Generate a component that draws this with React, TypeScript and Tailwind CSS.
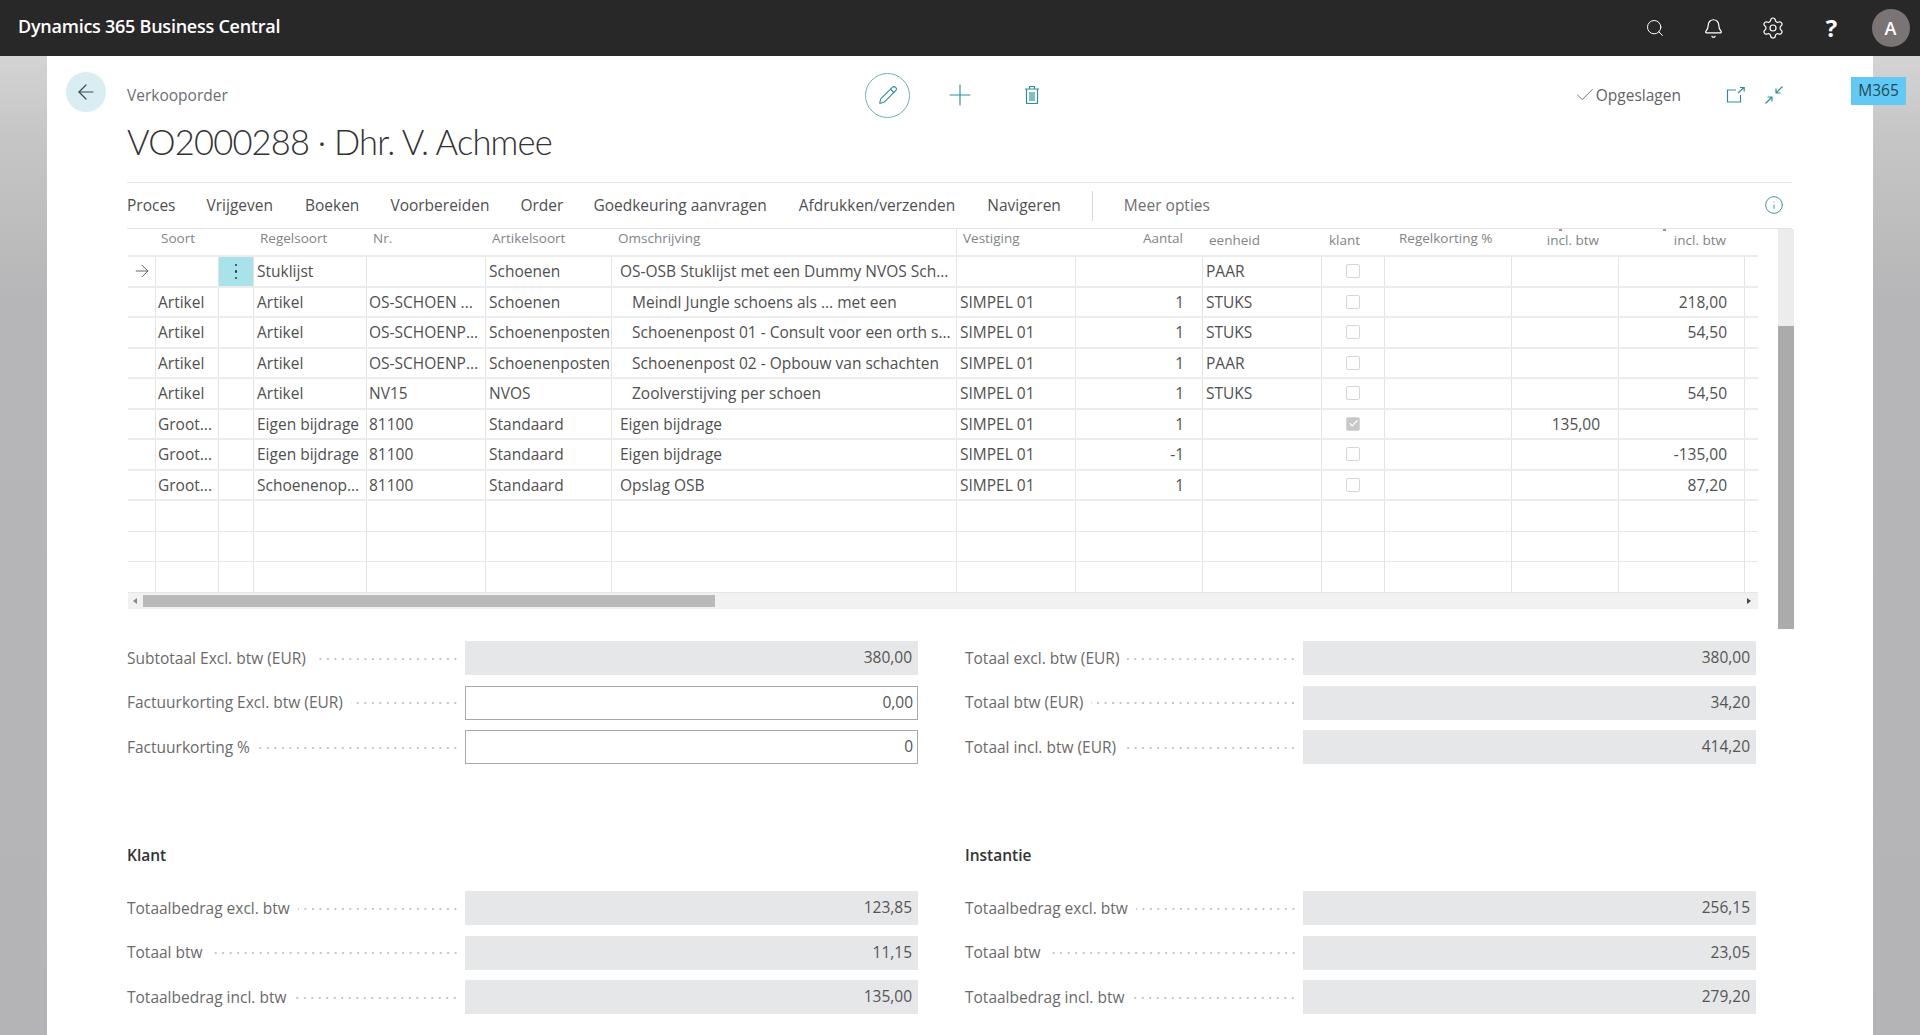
import React from 'react'
import { ArrowLeft, Bell, Check, Info, Pencil, Plus, Search, Settings } from 'lucide-react'

const gridCols = 'grid grid-cols-[28px_63px_35px_113px_119px_126px_345px_119px_127px_119px_63px_127px_107px_126px_12px]'
const cellBorder = 'border-r border-[#e3e3e3] overflow-hidden whitespace-nowrap'

type Row = {
  soort: string
  regelsoort: string
  nr: string
  artikel: string
  omschrijving: string
  indent?: boolean
  vestiging: string
  aantal: string
  eenheid: string
  checked?: boolean
  inclA?: string
  inclB?: string
}

const rows: Row[] = [
  { soort: '', regelsoort: 'Stuklijst', nr: '', artikel: 'Schoenen', omschrijving: 'OS-OSB Stuklijst met een Dummy NVOS Sch...', vestiging: '', aantal: '', eenheid: 'PAAR' },
  { soort: 'Artikel', regelsoort: 'Artikel', nr: 'OS-SCHOEN ...', artikel: 'Schoenen', omschrijving: 'Meindl Jungle schoens als ... met een', indent: true, vestiging: 'SIMPEL 01', aantal: '1', eenheid: 'STUKS', inclB: '218,00' },
  { soort: 'Artikel', regelsoort: 'Artikel', nr: 'OS-SCHOENP...', artikel: 'Schoenenposten', omschrijving: 'Schoenenpost 01 - Consult voor een orth s...', indent: true, vestiging: 'SIMPEL 01', aantal: '1', eenheid: 'STUKS', inclB: '54,50' },
  { soort: 'Artikel', regelsoort: 'Artikel', nr: 'OS-SCHOENP...', artikel: 'Schoenenposten', omschrijving: 'Schoenenpost 02 - Opbouw van schachten', indent: true, vestiging: 'SIMPEL 01', aantal: '1', eenheid: 'PAAR' },
  { soort: 'Artikel', regelsoort: 'Artikel', nr: 'NV15', artikel: 'NVOS', omschrijving: 'Zoolverstijving per schoen', indent: true, vestiging: 'SIMPEL 01', aantal: '1', eenheid: 'STUKS', inclB: '54,50' },
  { soort: 'Groot...', regelsoort: 'Eigen bijdrage', nr: '81100', artikel: 'Standaard', omschrijving: 'Eigen bijdrage', vestiging: 'SIMPEL 01', aantal: '1', eenheid: '', checked: true, inclA: '135,00' },
  { soort: 'Groot...', regelsoort: 'Eigen bijdrage', nr: '81100', artikel: 'Standaard', omschrijving: 'Eigen bijdrage', vestiging: 'SIMPEL 01', aantal: '-1', eenheid: '', inclB: '-135,00' },
  { soort: 'Groot...', regelsoort: 'Schoenenop...', nr: '81100', artikel: 'Standaard', omschrijving: 'Opslag OSB', vestiging: 'SIMPEL 01', aantal: '1', eenheid: '', inclB: '87,20' },
]

const menu = [
  ['Proces', 'ml-0'],
  ['Vrijgeven', 'ml-[31px]'],
  ['Boeken', 'ml-[32px]'],
  ['Voorbereiden', 'ml-[31px]'],
  ['Order', 'ml-[31px]'],
  ['Goedkeuring aanvragen', 'ml-[30px]'],
  ['Afdrukken/verzenden', 'ml-[32px]'],
  ['Navigeren', 'ml-[32px]'],
]

function Field({ label, value, editable }: { label: string; value: string; editable?: boolean }) {
  return (
    <div className="flex h-[34px] items-center">
      <div className="flex w-[332px] shrink-0 items-center pt-[1px] text-[15.5px] text-[#6a6a6a]">
        <span className="whitespace-nowrap">{label}</span>
        <span className="ml-2 h-[8px] flex-1 bg-[radial-gradient(circle,#c4c4c4_1px,transparent_1.2px)] bg-[length:7.5px_8px] bg-right bg-repeat-x" />
      </div>
      <div
        className={
          editable
            ? 'ml-[6px] flex h-full flex-1 items-center justify-end border border-[#a8a8a8] bg-white pr-[4px] text-[15.5px] text-[#555]'
            : 'ml-[6px] flex h-full flex-1 items-center justify-end bg-[#e6e7e8] pr-[6px] text-[15.5px] text-[#555]'
        }
      >
        {value}
      </div>
    </div>
  )
}

function TableRow({ row, first }: { row: Row; first: boolean }) {
  return (
    <div className={`${gridCols} h-[30.5px] border-b-2 border-[#ececec] text-[15.5px] leading-[28px] text-[#505050]`}>
      <div className={`${cellBorder} flex items-center justify-center text-[#555]`}>
        {first && <ArrowLeft className="h-[20px] w-[20px] rotate-180" strokeWidth={1.1} />}
      </div>
      <div className={`${cellBorder} pl-[2px]`}>{row.soort}</div>
      <div className={`${cellBorder} flex items-center justify-center ${first ? 'bg-[#a9e3ea]' : ''}`}>
        {first && (
          <span className="flex flex-col gap-[4px]">
            <span className="h-[2.5px] w-[2.5px] rounded-full bg-[#333]" />
            <span className="h-[2.5px] w-[2.5px] rounded-full bg-[#333]" />
            <span className="h-[2.5px] w-[2.5px] rounded-full bg-[#333]" />
          </span>
        )}
      </div>
      <div className={`${cellBorder} pl-[3px]`}>{row.regelsoort}</div>
      <div className={`${cellBorder} pl-[2px]`}>{row.nr}</div>
      <div className={`${cellBorder} pl-[3px]`}>{row.artikel}</div>
      <div className={`${cellBorder} ${row.indent ? 'pl-[20px]' : 'pl-[8px]'}`}>{row.omschrijving}</div>
      <div className={`${cellBorder} pl-[3px]`}>{row.vestiging}</div>
      <div className={`${cellBorder} pr-[18px] text-right`}>{row.aantal}</div>
      <div className={`${cellBorder} pl-[3px]`}>{row.eenheid}</div>
      <div className={`${cellBorder} flex items-center justify-center`}>
        <span className={`flex h-[14px] w-[14px] items-center justify-center rounded-[2px] border border-[#d6d6d6] ${row.checked ? 'bg-[#c8c8c8]' : 'bg-white'}`}>
          {row.checked && <Check className="h-[11px] w-[11px] text-white" strokeWidth={2.5} />}
        </span>
      </div>
      <div className={cellBorder} />
      <div className={`${cellBorder} pr-[18px] text-right`}>{row.inclA}</div>
      <div className={`${cellBorder} pr-[17px] text-right`}>{row.inclB}</div>
      <div />
    </div>
  )
}

function EmptyRow() {
  return (
    <div className={`${gridCols} h-[30.5px] border-b border-[#e6e6e6]`}>
      {Array.from({ length: 14 }).map((_, i) => (
        <div key={i} className="border-r border-[#e3e3e3]" />
      ))}
      <div />
    </div>
  )
}

export default function App() {
  return (
    <div className="flex h-[1035px] w-[1920px] flex-col overflow-hidden font-['Open_Sans','Liberation_Sans',sans-serif]">
      <header className="flex h-[56px] shrink-0 items-center justify-between bg-[#282828] text-white">
        <div className="pb-[3px] pl-[18px] text-[18px] font-semibold tracking-[-0.25px]">Dynamics 365 Business Central</div>
        <div className="flex items-center">
          <div className="flex w-[59px] justify-center"><Search className="h-[20px] w-[20px]" strokeWidth={1.2} /></div>
          <div className="flex w-[59px] justify-center"><Bell className="h-[21px] w-[21px]" strokeWidth={1.4} /></div>
          <div className="flex w-[59px] justify-center"><Settings className="h-[24px] w-[24px]" strokeWidth={1.2} /></div>
          <div className="flex w-[59px] justify-center text-[24px] font-bold">?</div>
          <div className="flex w-[59px] justify-center">
            <div className="flex h-[38px] w-[38px] items-center justify-center rounded-full bg-[#7a7574] text-[18px] font-semibold">A</div>
          </div>
        </div>
      </header>

      <main className="relative flex-1 bg-[linear-gradient(180deg,#d4d4d4_0%,#c6c6c6_8%,#b6b6b8_25%,#b4b4b6_100%)] px-[47px]">
        <div className="absolute left-[1851px] top-[21px] flex h-[28px] w-[55px] items-center justify-center bg-[#62c9f5] text-[15.5px] text-[#1f4a5c]">M365</div>

        <div className="h-full bg-white pt-[16px]">
          <div className="flex h-[46px] items-center pr-[89px]">
            <div className="flex w-[818px] shrink-0 items-center pl-[19px]">
              <button type="button" className="-mt-[6px] flex h-[40px] w-[40px] items-center justify-center rounded-full bg-[#d8eef2] text-[#3c4a50]">
                <ArrowLeft className="h-[24px] w-[24px]" strokeWidth={1.2} />
              </button>
              <span className="ml-[21px] mt-[2px] text-[15.5px] text-[#6a6f73]">Verkooporder</span>
            </div>
            <button type="button" className="flex h-[45px] w-[45px] items-center justify-center rounded-full border border-[#6fb3b8] text-[#2f8f98]">
              <Pencil className="h-[20px] w-[20px]" strokeWidth={1.3} />
            </button>
            <Plus className="ml-[33px] h-[34px] w-[34px] text-[#2f8f98]" strokeWidth={0.8} />
            <svg viewBox="0 0 16 20" className="ml-[47px] h-[20px] w-[16px] text-[#2f8f98]" fill="none" stroke="currentColor" strokeWidth="1.2">
              <path d="M1 4h14M5.5 4V1.5h5V4M2.5 4v14.5h11V4M6 7v9M8 7v9M10 7v9" />
            </svg>
            <div className="ml-auto flex items-center">
              <Check className="h-[22px] w-[22px] text-[#5a6a70]" strokeWidth={1} />
              <span className="mt-[2px] text-[15.5px] text-[#5f6468]">Opgeslagen</span>
              <svg viewBox="0 0 20 18" className="ml-[45px] h-[18px] w-[20px] text-[#2f8f98]" fill="none" stroke="currentColor" strokeWidth="1.2">
                <path d="M10 4H1.5v12h13V9M12 7l6-5.5M14 1.5h4.2v4" />
              </svg>
              <svg viewBox="0 0 20 20" className="ml-[18px] h-[20px] w-[20px] text-[#2f8f98]" fill="none" stroke="currentColor" strokeWidth="1.2">
                <path d="M18.5 1.5 12 8M12 3.5V8h4.5M1.5 18.5 8 12M3.5 12H8v4.5" />
              </svg>
            </div>
          </div>

          <h1 className="h-[50px] pl-[80px] font-['Lato','Open_Sans',sans-serif] text-[34.5px] font-light leading-[48px] tracking-[-0.8px] text-[#333]">VO2000288 · Dhr. V. Achmee</h1>

          <nav className="ml-[80px] mt-[14px] flex h-[47px] w-[1665px] items-center border-y border-[#e3e3e3] text-[15.5px] text-[#505050]">
            {menu.map(([label, gap]) => (
              <span key={label} className={`${gap} whitespace-nowrap`}>{label}</span>
            ))}
            <span className="ml-[31px] h-[30px] w-px bg-[#d8d8d8]" />
            <span className="ml-[31px] text-[#6f6f6f]">Meer opties</span>
            <Info className="-mt-[2px] ml-auto mr-[8px] h-[20px] w-[20px] text-[#2f8f98]" strokeWidth={1.1} />
          </nav>

          <div className="ml-[81px] flex h-[400px]">
            <div className="w-[1630px]">
              <div className={`${gridCols} relative h-[28px] border-b-2 border-[#ececec] text-[13.5px] leading-[18px] text-[#808488]`}>
                <div />
                <div className="pl-[5px]">Soort</div>
                <div />
                <div className="pl-[6px]">Regelsoort</div>
                <div className="pl-[6px]">Nr.</div>
                <div className="pl-[6px]">Artikelsoort</div>
                <div className="border-r border-[#e3e3e3] pl-[6px]">Omschrijving</div>
                <div className="pl-[6px]">Vestiging</div>
                <div className="pr-[20px] text-right">Aantal</div>
                <div className="pl-[6px] pt-[2px]">eenheid</div>
                <div className="pr-[18px] pt-[2px] text-center">klant</div>
                <div className="whitespace-nowrap pl-[14px]">Regelkorting %</div>
                <div className="pr-[20px] pt-[2px] text-right">incl. btw</div>
                <div className="pr-[19px] pt-[2px] text-right">incl. btw</div>
                <div />
                <span className="absolute left-[1431px] top-0 h-[2px] w-[3px] bg-[#9a9a9a]" />
                <span className="absolute left-[1535px] top-0 h-[2px] w-[3px] bg-[#9a9a9a]" />
              </div>
              {rows.map((row, i) => (
                <TableRow key={i} row={row} first={i === 0} />
              ))}
              <EmptyRow />
              <EmptyRow />
              <EmptyRow />
              <div className="flex h-[16px] items-center bg-[#f1f1f1]">
                <span className="ml-[5px] h-0 w-0 border-y-[3px] border-r-[4px] border-y-transparent border-r-[#888]" />
                <span className="ml-[6px] h-[12px] w-[572px] bg-[#b9b9b9]" />
                <span className="ml-auto mr-[7px] h-0 w-0 border-y-[3px] border-l-[4px] border-y-transparent border-l-[#444]" />
              </div>
            </div>
            <div className="ml-[20px] w-[16px] bg-[#ececec]">
              <div className="mt-[97px] h-[303px] bg-[#ababab]" />
            </div>
          </div>

          <div className="ml-[80px] mt-[12px] grid w-[1629px] grid-cols-2 gap-x-[47px] gap-y-[10.5px]">
            <Field label="Subtotaal Excl. btw (EUR)" value="380,00" />
            <Field label="Totaal excl. btw (EUR)" value="380,00" />
            <Field label="Factuurkorting Excl. btw (EUR)" value="0,00" editable />
            <Field label="Totaal btw (EUR)" value="34,20" />
            <Field label="Factuurkorting %" value="0" editable />
            <Field label="Totaal incl. btw (EUR)" value="414,20" />
          </div>

          <div className="ml-[80px] mt-[79px] grid w-[1629px] grid-cols-2 gap-x-[47px] text-[15.5px] font-semibold leading-[24px] text-[#333]">
            <div>Klant</div>
            <div>Instantie</div>
          </div>

          <div className="ml-[80px] mt-[24px] grid w-[1629px] grid-cols-2 gap-x-[47px] gap-y-[10.5px]">
            <Field label="Totaalbedrag excl. btw" value="123,85" />
            <Field label="Totaalbedrag excl. btw" value="256,15" />
            <Field label="Totaal btw" value="11,15" />
            <Field label="Totaal btw" value="23,05" />
            <Field label="Totaalbedrag incl. btw" value="135,00" />
            <Field label="Totaalbedrag incl. btw" value="279,20" />
          </div>
        </div>
      </main>
    </div>
  )
}
